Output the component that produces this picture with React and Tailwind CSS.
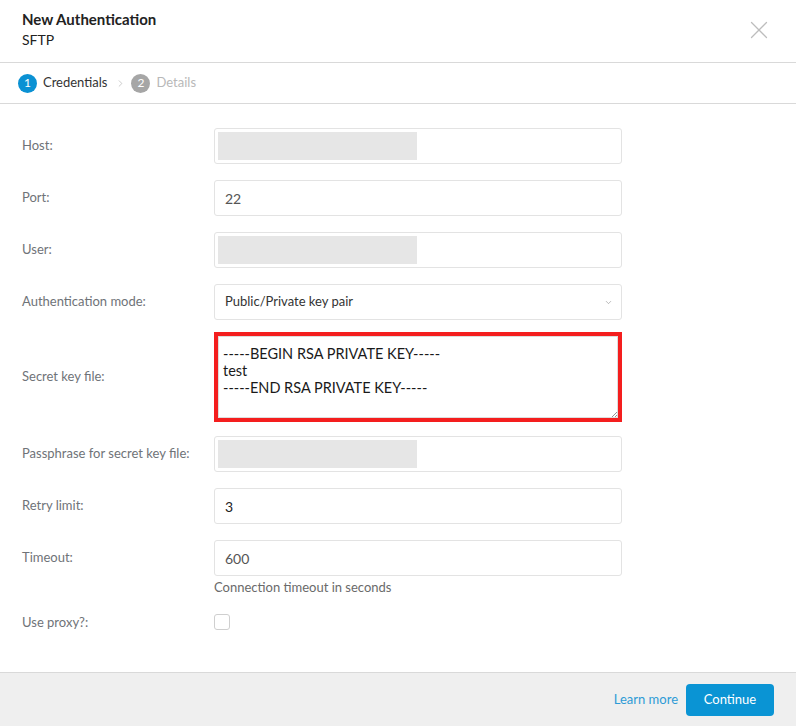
import { ChevronRight, ChevronDown, X } from 'lucide-react';

const font = { fontFamily: 'Lato, "Noto Sans", sans-serif' };

function Row({ label, children, className = '' }) {
  return (
    <div className={`flex items-center ${className}`}>
      <div className="w-[192px] shrink-0 text-[13px] text-[#6f7378]">{label}</div>
      <div className="w-[408px]">{children}</div>
    </div>
  );
}

function Masked() {
  return (
    <div className="h-9 border border-[#e3e3e3] rounded-[3px] bg-white p-[3px]">
      <div className="h-full w-[199px] bg-[#e6e6e6]" />
    </div>
  );
}

function TextInput({ value, dark }) {
  return (
    <div
      className={`h-9 border border-[#e3e3e3] rounded-[3px] bg-white px-[10px] flex items-center text-[14px] ${
        dark ? 'text-[#222]' : 'text-[#555]'
      }`}
    >
      {value}
    </div>
  );
}

export default function App() {
  return (
    <div className="w-[796px] h-[726px] bg-white flex flex-col" style={font}>
      {/* Header */}
      <div className="h-[63px] flex items-start justify-between px-[22px] pt-[9px] border-b border-[#d9d9d9]">
        <div>
          <div className="text-[15px] font-bold text-[#222] leading-[20px]">New Authentication</div>
          <div className="text-[14px] text-[#222] leading-[20px] mt-[1px]">SFTP</div>
        </div>
        <X className="w-[30px] h-[30px] text-[#bdbdbd] mt-[6px]" strokeWidth={1} />
      </div>

      {/* Steps */}
      <div className="h-[41px] flex items-center px-[18px] border-b border-[#d9d9d9] text-[13px]">
        <div className="w-[19px] h-[19px] rounded-full bg-[#0b91d3] text-white flex items-center justify-center text-[12px]">1</div>
        <span className="ml-[6px] text-[#333]">Credentials</span>
        <ChevronRight className="w-[11px] h-[11px] text-[#b5b5b5] ml-[8px] mr-[5px]" strokeWidth={1.5} />
        <div className="w-[19px] h-[19px] rounded-full bg-[#a6a6a6] text-white flex items-center justify-center text-[12px]">2</div>
        <span className="ml-[6px] text-[#b8b8b8]">Details</span>
      </div>

      {/* Body */}
      <div className="flex-1 px-[22px] pt-[24px]">
        <Row label="Host:">
          <Masked />
        </Row>
        <Row label="Port:" className="mt-4">
          <TextInput value="22" />
        </Row>
        <Row label="User:" className="mt-4">
          <Masked />
        </Row>
        <Row label="Authentication mode:" className="mt-4">
          <div className="h-9 border border-[#e3e3e3] rounded-[3px] bg-white pl-[10px] pr-[8px] flex items-center justify-between text-[13px] text-[#333]">
            <span>Public/Private key pair</span>
            <ChevronDown className="w-[9px] h-[9px] text-[#888]" strokeWidth={1.5} />
          </div>
        </Row>
        <Row label="Secret key file:" className="mt-3">
          <div className="h-[90px] border-4 border-[#f41e1e] bg-white relative">
            <div className="h-full border border-[#ddd] px-[4px] pt-[8px] text-[14.5px] leading-[17px] text-[#1a1a1a]">
              <div>-----BEGIN RSA PRIVATE KEY-----</div>
              <div>test</div>
              <div>-----END RSA PRIVATE KEY-----</div>
            </div>
            <svg className="absolute right-[1px] bottom-[1px]" width="6" height="6" viewBox="0 0 6 6">
              <path d="M1 6 L6 1 M4 6 L6 4" stroke="#777" strokeWidth="0.8" />
            </svg>
          </div>
        </Row>
        <Row label="Passphrase for secret key file:" className="mt-[14px]">
          <Masked />
        </Row>
        <Row label="Retry limit:" className="mt-4">
          <TextInput value="3" dark />
        </Row>
        <Row label="Timeout:" className="mt-4">
          <TextInput value="600" />
        </Row>
        <div className="ml-[192px] mt-[2px] text-[13px] text-[#6a6a6a]">Connection timeout in seconds</div>
        <Row label="Use proxy?:" className="mt-[15px]">
          <div className="w-4 h-4 border border-[#cfcfcf] rounded-[3px] bg-white" />
        </Row>
      </div>

      {/* Footer */}
      <div className="h-[54px] bg-[#efefef] border-t border-[#d9d9d9] flex items-center justify-end px-[22px] gap-[8px]">
        <span className="text-[13px] text-[#2d9bd6]">Learn more</span>
        <button className="h-8 w-[88px] rounded-[4px] bg-[#0a94d4] text-white text-[13px]">Continue</button>
      </div>
    </div>
  );
}
